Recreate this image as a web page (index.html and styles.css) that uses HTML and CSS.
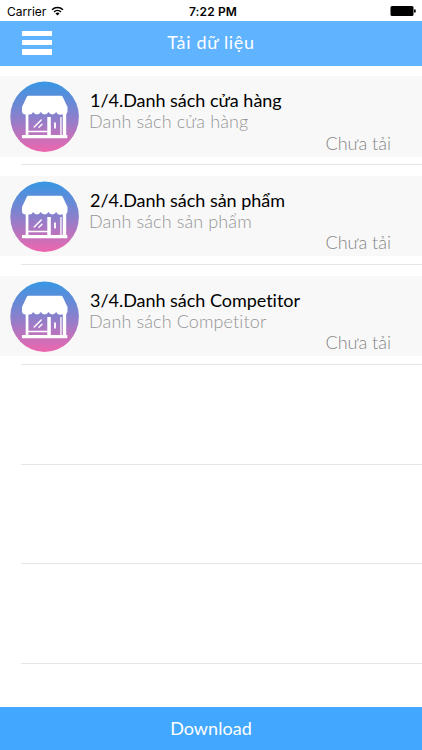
FILE: index.html
```
<!DOCTYPE html>
<html lang="vi">

<head>
    <meta charset="UTF-8">
    <meta name="viewport" content="width=device-width, initial-scale=1.0">
    <title>Tải dữ liệu</title>
    <link rel="stylesheet" href="styles.css">
</head>

<body>
    <!-- shared store icon -->
    <svg class="symbols" width="0" height="0">
        <defs>
            <linearGradient id="storeBg" x1="0" y1="0" x2="0" y2="1">
                <stop offset="0" stop-color="#3697e4" />
                <stop offset="0.5" stop-color="#8a80cc" />
                <stop offset="1" stop-color="#ee66ae" />
            </linearGradient>
        </defs>
        <symbol id="store" viewBox="0 0 70 72">
            <ellipse cx="34.6" cy="35.8" rx="34.3" ry="35.2" fill="url(#storeBg)" />
            <path fill="#fff" d="M18.500 14.700h32.500q1.200 0 1.800 1.200L57.500 26v4.500a3.500 3.500 0 0 1-3.500 3h-2.800a4.200 4.200 0 0 1-5-2.500a4.300 4.300 0 0 1-7.700 0a4.300 4.300 0 0 1-7.700 0a4.300 4.300 0 0 1-7.700 0a4.200 4.200 0 0 1-4.600 2.500h-3a3.500 3.500 0 0 1-3.500-3V26l4.700-10.100q.6-1.200 1.800-1.200z" />
            <path fill="#fff" d="M15.700 32h2.700v23h-2.700zM52.800 32h3.400v23h-3.400zM37.300 36h3.500v18.500h-3.500zM50.300 36h1.300v18h-1.300zM18 49.800h20v1.500H18zM12 54h45.300v3.200H12z" />
            <path d="M24.200 46l7-7M29 46.300l3-3" stroke="#fff" stroke-width="1.400" stroke-linecap="round" fill="none" />
            <path d="M45 41.500v6" stroke="#fff" stroke-width="1.800" />
        </symbol>
    </svg>

    <div class="screen">
        <div class="status-bar">
            <div class="carrier">
                <span>Carrier</span>
                <svg width="13" height="10" viewBox="0 0 13 10">
                    <path d="M1 3.700a8 8 0 0 1 11 0M3.100 5.900a5 5 0 0 1 6.800 0" fill="none" stroke="#000" stroke-width="1.500" />
                    <path d="M6.500 9.500L4.500 7.500a2.900 2.900 0 0 1 4 0z" />
                </svg>
            </div>
            <div class="clock">7:22 PM</div>
            <svg class="battery" width="26" height="10" viewBox="0 0 26 10">
                <rect x="0.500" y="0" width="23" height="10" rx="1.500" />
                <rect x="24" y="3.500" width="1.700" height="3" />
            </svg>
        </div>

        <header class="nav-bar">
            <div class="menu-btn"><i></i><i></i><i></i></div>
            <h1>Tải dữ liệu</h1>
        </header>

        <ul class="list">
            <li class="row">
                <div class="item">
                    <svg class="icon"><use href="#store" /></svg>
                    <div class="info">
                        <h2>1/4.Danh sách cửa hàng</h2>
                        <p>Danh sách cửa hàng</p>
                        <p class="state">Chưa tải</p>
                    </div>
                </div>
            </li>
            <li class="row">
                <div class="item">
                    <svg class="icon"><use href="#store" /></svg>
                    <div class="info">
                        <h2>2/4.Danh sách sản phẩm</h2>
                        <p>Danh sách sản phẩm</p>
                        <p class="state">Chưa tải</p>
                    </div>
                </div>
            </li>
            <li class="row">
                <div class="item">
                    <svg class="icon"><use href="#store" /></svg>
                    <div class="info">
                        <h2>3/4.Danh sách Competitor</h2>
                        <p>Danh sách Competitor</p>
                        <p class="state">Chưa tải</p>
                    </div>
                </div>
            </li>
            <li class="row"></li>
            <li class="row"></li>
            <li class="row"></li>
        </ul>

        <footer class="download">Download</footer>
    </div>
</body>

</html>
```

FILE: styles.css
```
* {
    box-sizing: border-box;
}

body {
    margin: 0;
    font-family: Lato, 'Open Sans', sans-serif;
    background: #fff;
}

/* must stay rendered so the gradient keeps working */
.symbols {
    display: block;
}

.screen {
    display: flex;
    flex-direction: column;
    height: 750px;
    overflow: hidden;
}

.status-bar {
    display: grid;
    grid-template-columns: 1fr auto 1fr;
    align-items: center;
    height: 21px;
    padding: 1px 6px 0 7px;
    font-family: Inter, sans-serif;
    font-size: 12px;
    color: #000;
}

.carrier {
    display: flex;
    align-items: center;
    gap: 5px;
}

.clock {
    padding-left: 3px;
    font-weight: 600;
    letter-spacing: 0.15px;
}

.battery {
    justify-self: end;
}

.nav-bar {
    display: grid;
    grid-template-columns: 1fr auto 1fr;
    align-items: center;
    height: 44.5px;
    padding: 0 22px;
    background: #5fb3ff;
    color: #fff;
}

.menu-btn {
    display: flex;
    flex-direction: column;
    gap: 4px;
    width: 30px;
    margin-top: -1px;
}

.menu-btn i {
    height: 5.3px;
    background: #fff;
}

.nav-bar h1 {
    margin: -2px 0 0;
    font-size: 18px;
    font-weight: 400;
    letter-spacing: 0.65px;
}

.list {
    flex: 1;
    margin: 0;
    padding: 0;
    list-style: none;
}

.row {
    height: 99.8px;
    padding-top: 10.6px;
    background: linear-gradient(#e6e6e6, #e6e6e6) 21px 100% / 100% 1px no-repeat;
}

.item {
    display: flex;
    height: 80.5px;
    padding: 5px 31px 0 10px;
    background: #f8f8f8;
}

.icon {
    flex: none;
    width: 70px;
    height: 72px;
}

.info {
    flex: 1;
    padding: 9px 0 0 9px;
}

.info h2,
.info p {
    margin: 0;
    font-size: 18px;
    line-height: 21.2px;
    font-weight: 400;
    white-space: nowrap;
}

.info h2 {
    padding-left: 1px;
    color: #000;
    letter-spacing: -0.03px;
}

.info p {
    color: #959595;
    font-weight: 300;
    letter-spacing: 0.12px;
}

.info .state {
    text-align: right;
    color: #858585;
    letter-spacing: 0;
}

.download {
    display: flex;
    align-items: center;
    justify-content: center;
    height: 43px;
    padding-bottom: 2px;
    background: #42a7ff;
    color: #fff;
    font-size: 18px;
    letter-spacing: 0.05px;
}
```
